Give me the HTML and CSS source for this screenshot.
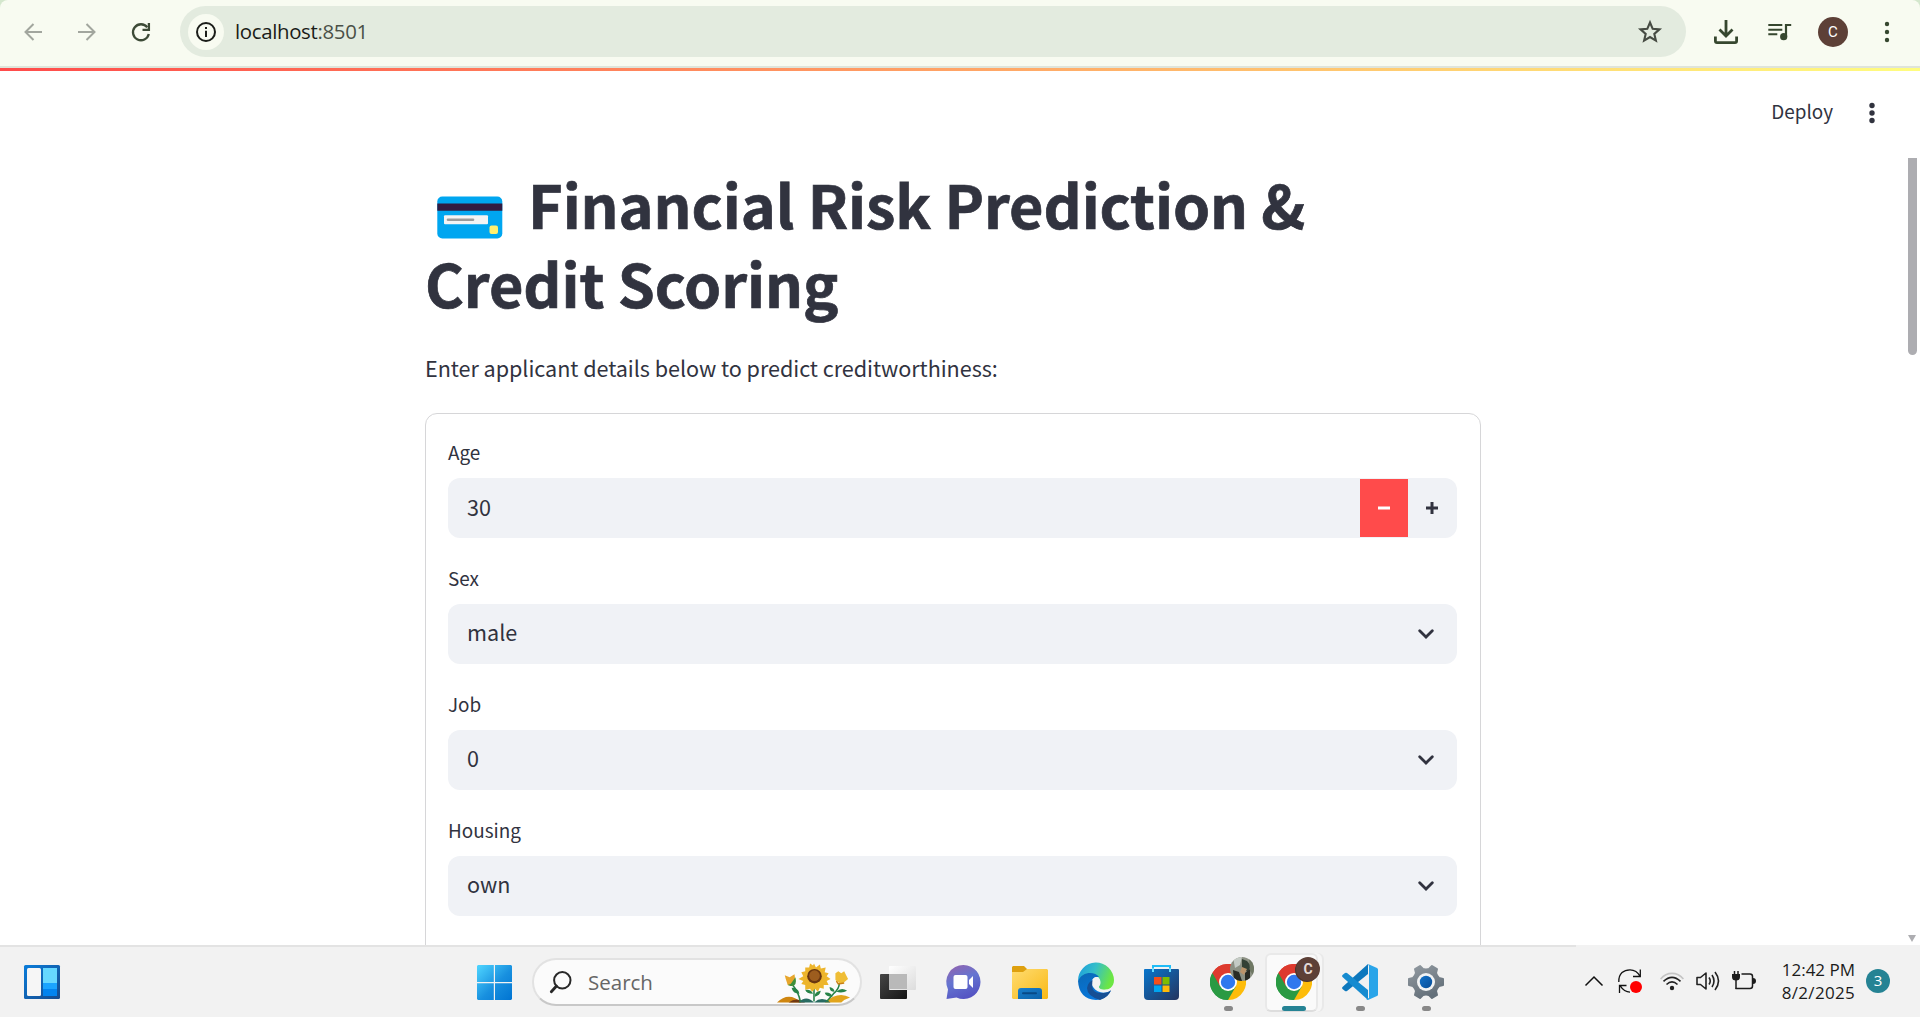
FILE: index.html
```html
<!DOCTYPE html>
<html lang="en">
<head>
<meta charset="utf-8">
<title>Financial Risk Prediction</title>
<link rel="stylesheet" href="styles.css">
</head>
<body>
<svg width="0" height="0" class="defs" aria-hidden="true">
  <defs>
    <symbol id="chrome" viewBox="0 0 36 36">
      <path d="M18 18 2.4 9A18 18 0 0 1 33.6 9Z" fill="#dd3a2e"/>
      <path d="M18 18 33.6 9A18 18 0 0 1 18 36Z" fill="#fdbc0a"/>
      <path d="M18 18 18 36A18 18 0 0 1 2.4 9Z" fill="#2a9a43"/>
      <path d="M18 9H33.6L26 18 18 36 25.8 22.5Z" fill="#fdbc0a"/>
      <path d="M2.4 9 10.2 22.5 18 27 25.8 22.5 18 36A18 18 0 0 1 2.4 9Z" fill="#2a9a43"/>
      <path d="M2.4 9A18 18 0 0 1 33.6 9H18L10.2 22.5Z" fill="#dd3a2e"/>
      <circle cx="18" cy="18" r="9" fill="#fff"/><circle cx="18" cy="18" r="7.2" fill="#2f78ee"/>
    </symbol>
    <symbol id="chevron" viewBox="0 0 16 10"><path d="M1.7 1.8 8 8 14.3 1.8" fill="none" stroke="#31333f" stroke-width="2.8" stroke-linecap="round" stroke-linejoin="miter"/></symbol>
  </defs>
</svg>

<header class="browser">
  <div class="nav">
    <svg width="18" height="18" viewBox="0 0 18 18" fill="none" stroke="#a2a69e" stroke-width="2"><path d="M18 9H1.5M9.5 1 1.5 9l8 8"/></svg>
    <svg width="18" height="18" viewBox="0 0 18 18" fill="none" stroke="#a2a69e" stroke-width="2"><path d="M0 9h16.5M8.500 1l8 8-8 8"/></svg>
    <svg width="18" height="18" viewBox="0 0 18 18" fill="none" stroke="#3d4b37" stroke-width="2.3"><path d="M15.300 4.300A8 8 0 1 0 16.800 11"/><path d="M16.900 0v6.800H10.500"/></svg>
  </div>
  <div class="omnibox">
    <span class="site-info"><svg width="20" height="20" viewBox="0 0 20 20"><circle cx="10" cy="10" r="9" fill="none" stroke="#1b1d19" stroke-width="2"/><path d="M10 8.700V15M10 5v2.100" stroke="#1b1d19" stroke-width="2"/></svg></span>
    <span class="url"><b>localhost</b>:8501</span>
    <svg class="star" width="24" height="24" viewBox="0 0 24 24" fill="none" stroke="#464b43" stroke-width="2.100"><path d="m12 2.500 2.700 6.300 6.800.6-5.200 4.500 1.600 6.700L12 17l-5.900 3.600 1.600-6.700L2.500 9.400l6.800-.6z"/></svg>
  </div>
  <div class="tools">
    <svg width="24" height="24" viewBox="0 0 24 24" fill="none" stroke="#36472f" stroke-width="2.800"><path d="M12 0v15M5.500 9.500 12 16l6.500-6.500"/><path d="M1.400 16.500V21q0 1.600 1.600 1.600h18q1.600 0 1.600-1.600v-4.500"/></svg>
    <svg width="24" height="20" viewBox="0 0 24 20" fill="none" stroke="#36472f" stroke-width="2"><path d="M.3 3h14M.3 7.700h14M.3 12.300h9"/><path d="M18 15V3h5.200" stroke-width="2.200"/><circle cx="15.700" cy="14.700" r="3.600" fill="#36472f" stroke="none"/></svg>
    <span class="avatar">C</span>
    <svg width="6" height="22" viewBox="0 0 6 22" fill="#36472f"><circle cx="3" cy="3" r="2.200"/><circle cx="3" cy="11" r="2.200"/><circle cx="3" cy="19" r="2.200"/></svg>
  </div>
</header>

<div class="page">
  <div class="decoration"></div>
  <div class="app-header">
    <span>Deploy</span>
    <svg width="6" height="22" viewBox="0 0 6 22" fill="#31333f"><circle cx="3" cy="3.500" r="2.700"/><circle cx="3" cy="11" r="2.700"/><circle cx="3" cy="18.500" r="2.700"/></svg>
  </div>
  <main>
    <h1><svg class="card" width="66" height="43" viewBox="0 0 66 43"><rect x=".3" y=".5" width="65" height="42" rx="5" fill="#00a6f0"/><path fill="#321b41" d="M.3 7.500h65v7.200H.3z"/><rect x="7" y="19.200" width="44" height="9" rx="1" fill="#f4f4f4"/><path d="M11 23.800h25" stroke="#9b9b9b" stroke-width="2.600" stroke-linecap="round"/><rect x="52.500" y="29.500" width="8.500" height="8.500" rx="2" fill="#fff06e"/></svg>Financial Risk Prediction &amp; <br>Credit Scoring</h1>
    <p class="intro">Enter applicant details below to predict creditworthiness:</p>
    <form class="form">
      <label>Age</label>
      <div class="field"><span>30</span><div class="steps"><i class="minus"><svg width="12" height="12"><path d="M0 6h12" stroke="#fff" stroke-width="3"/></svg></i><i><svg width="12" height="12"><path d="M0 6h12M6 0v12" stroke="#31333f" stroke-width="3"/></svg></i></div></div>
      <label>Sex</label>
      <div class="field select"><span>male</span><svg class="chev" width="16" height="10"><use href="#chevron"/></svg></div>
      <label>Job</label>
      <div class="field select"><span>0</span><svg class="chev" width="16" height="10"><use href="#chevron"/></svg></div>
      <label>Housing</label>
      <div class="field select"><span>own</span><svg class="chev" width="16" height="10"><use href="#chevron"/></svg></div>
    </form>
  </main>
  <div class="scroll-thumb"></div>
  <div class="scroll-arrow"></div>
</div>

<footer class="taskbar">
  <div class="widgets">
    <svg width="36" height="34" viewBox="0 0 36 34"><defs><linearGradient id="wg" x2="1" y2="1"><stop stop-color="#0a7ddb"/><stop offset="1" stop-color="#174a8c"/></linearGradient></defs><rect width="36" height="34" rx="1.500" fill="url(#wg)"/><rect x="3" y="3" width="14" height="28" rx="1.500" fill="#f6f6f6"/><path fill="#66d8ff" d="M19 3h14v15H19z"/><path fill="#1ba4ff" d="M19 18h14v6H19z"/><path fill="#0384ef" d="M19 24h14v7H19z"/></svg>
  </div>
  <div class="center">
    <svg class="start" width="35" height="35" viewBox="0 0 35 35"><defs><linearGradient id="win" x1="0" y1="0" x2="35" y2="35" gradientUnits="userSpaceOnUse"><stop stop-color="#50d6ff"/><stop offset=".55" stop-color="#1890df"/><stop offset="1" stop-color="#0074d2"/></linearGradient></defs><path fill="url(#win)" d="M1 0h15.800v17H0V1zM18 0h16l1 1v16H18zM0 18.200h16.800V35H1l-1-1zM18 18.200h17V34l-1 1H18z"/></svg>
    <div class="search">
      <svg width="22" height="22" viewBox="0 0 22 22" fill="none" stroke="#282828" stroke-width="2"><circle cx="12.300" cy="9.300" r="8.200"/><path d="M6.500 15 1.300 20.700" stroke-width="2.800" stroke-linecap="round"/></svg>
      <span>Search</span>
      <svg class="flowers" width="74" height="40" viewBox="0 0 76 40">
        <path d="M0 40q12-12 25 0z" fill="#cf8610"/><path d="M12 40q8-6 17 0z" fill="#713812"/><path d="M49 40q14-12 26-5-6 2-9 5z" fill="#e2a51c"/>
        <path d="M22 40q8-8 16 0 8-7 17 0z" fill="#286b61"/>
        <path d="M16 22q6 7 8 17M38 21v18M64 20q0 6-6 11l-7 8" stroke="#278348" stroke-width="1.600" fill="none"/>
        <path d="M23 31q-7 0-8-6 7 0 8 6zM37 31q-7 0-8-4 6-1 8 4zM39 34q-1-5 6-6-1 5-6 6zM59 29q-5 0-5-5 5 1 5 5zM61 29q5-5 11-1-5 3-11 1zM57 34q-7 0-8-4 6-1 8 4z" fill="#278348"/>
        <path d="M9 16 8 12l5 2 5-3 1 8-3 4-5-1z" fill="#e7a62c"/><path d="m11 22 3-1 5-7q2 10-5 9z" fill="#3d8f3b"/>
        <path fill="#edb52c" d="m38 0 2 4 4-3 1 4 5-1-1 5 4 1-2 3 4 3-4 2 2 4-5 0 0 4-4-1-2 4-3-3-3 3-2-3-5 1 0-5-4-1 2-3-5-2 5-3-2-4 4-1 0-4 4 0 1-4 3 2z"/><circle cx="38.500" cy="13" r="7.500" fill="#693510"/><circle cx="38.500" cy="12.500" r="5.500" fill="#9d5d1e"/>
        <path d="m60 17 0-7 3-2 3 2 3-2 2 4 2 4-5 4-4 0z" fill="#efbd35"/><path d="m61 18 2 3 6-1" stroke="#c98015" stroke-width="1.500" fill="none"/>
      </svg>
    </div>
    <div class="apps">
      <div class="app"><svg width="36" height="36" viewBox="0 0 36 36"><defs><linearGradient id="dk" x2="1" y2="1"><stop stop-color="#464646"/><stop offset="1" stop-color="#151515"/></linearGradient><linearGradient id="lt" x2="1" y2="1"><stop stop-color="#fff"/><stop offset="1" stop-color="#dcdcdc"/></linearGradient></defs><rect y="10" width="27" height="25" rx="1" fill="url(#dk)"/><rect x="9" y="2" width="27" height="24" rx="1" fill="url(#lt)"/><path fill="#b9b9b9" d="M9 10h18v15H9z"/></svg></div>
      <div class="app"><svg width="36" height="36" viewBox="0 0 36 36"><defs><linearGradient id="ch" x1=".2" x2=".6" y2="1"><stop stop-color="#9064b0"/><stop offset=".45" stop-color="#6575d1"/><stop offset="1" stop-color="#5452c2"/></linearGradient></defs><path fill="url(#ch)" d="M17.500 1a17 17 0 1 1-7 32.500L.5 35 2 25.500A17 17 0 0 1 17.500 1z"/><rect x="7.500" y="11" width="14" height="14" rx="2" fill="#fff"/><path fill="#fff" d="m23 16 4-4v12l-4-4z"/></svg></div>
      <div class="app"><svg width="36" height="36" viewBox="0 0 36 36"><defs><linearGradient id="fo" x2="1" y2="1"><stop stop-color="#ffdc72"/><stop offset="1" stop-color="#f9b915"/></linearGradient><linearGradient id="fb" x2="1" y2="1"><stop stop-color="#197fcb"/><stop offset="1" stop-color="#0c62aa"/></linearGradient></defs><path fill="#dea00f" d="M1 2h11l3 3v6H0V3z"/><path fill="url(#fo)" d="M0 8h11l4-3h20l1 1v28l-1 1H1l-1-1z"/><path fill="url(#fb)" d="M6 35V27q0-3 3-3h18q3 0 3 3v8z"/><path d="M11 29.300h13" stroke="#074a87" stroke-width="2" stroke-linecap="round"/></svg></div>
      <div class="app"><svg width="36" height="36" viewBox="0 0 36 36"><defs><linearGradient id="eg" x2="1" y2=".3"><stop stop-color="#1a9be0"/><stop offset=".5" stop-color="#35bfc8"/><stop offset="1" stop-color="#6ce644"/></linearGradient><linearGradient id="ed" x2=".5" y2="1"><stop stop-color="#0b68b5"/><stop offset="1" stop-color="#0878dd"/></linearGradient></defs><path fill="url(#eg)" d="M0 17A18 18 0 0 1 36 16c0 7-5 10-11 10-5 0-5-3-3-5 1-2 1-6-3-9Q10 7 0 17z"/><path fill="url(#ed)" d="M0 17C4 7 17 7 21 13c-7-1-9 5-6 10 4 6 11 7 18 4Q27 36 18 36 1 35 0 17z"/><path fill="#164f94" d="M15 16q-4 14 10 13 5 0 8-3-2 7-11 10-13-4-13-12 1-6 6-8z"/><path fill="#f3f3f3" d="M18.500 13c-5 0-5 7-1 11q6 4 15 1Q23 27 21 23.500c-.5-1.500 1-2 1-5q0-5-3.500-5.500z"/></svg></div>
      <div class="app"><svg width="36" height="36" viewBox="0 0 36 36"><defs><linearGradient id="st" x2="1" y2="1"><stop stop-color="#0876cd"/><stop offset="1" stop-color="#25345e"/></linearGradient></defs><path d="M9 8V2h17v6" fill="none" stroke="#20bcf7" stroke-width="2"/><path fill="url(#st)" d="M0 6q0-1 1-1h33q1 0 1 1v26q0 4-4 4H4q-4 0-4-4z"/><path d="M9 4v4M26 4v4" stroke="#65dcff" stroke-width="2"/><path fill="#f34f1c" d="M10 13h7.500v7.500H10z"/><path fill="#7fbc00" d="M18.500 13H25.500v7.500h-7z"/><path fill="#00a5f0" d="M10 21.500h7.500V28H10z"/><path fill="#ffba08" d="M18.500 21.500H25.500V28h-7z"/></svg></div>
      <div class="app"><svg width="36" height="36"><use href="#chrome"/></svg><svg class="profile" width="24" height="24" viewBox="0 0 24 24"><defs><clipPath id="pc"><circle cx="12" cy="12" r="12"/></clipPath></defs><g clip-path="url(#pc)"><path fill="#8c9184" d="M0 0h24v24H0z"/><path fill="#c4cbc5" d="M3 0h9l-2 8-5 3z"/><path fill="#334035" d="m12 2 5 2 4 5-3 6-6-3z"/><path fill="#bb946b" d="m12 10 5 2-3 6-4-3z"/><path fill="#292b24" d="m3 13 6 2 3 9H4zM15 16l5-4v10l-5 2z"/><path fill="#6f7864" d="M19 2h5v17l-4-5z"/></g></svg><span class="dot"></span></div>
      <div class="app"><div class="tile"></div><svg width="36" height="36"><use href="#chrome"/></svg><span class="profile initial">C</span><span class="dot active"></span></div>
      <div class="app"><svg width="36" height="36" viewBox="0 0 36 36"><path fill="#0d78bd" d="M26 0v10L5 27q-1 .7-2 0l-2.500-2q-1-1 0-2z"/><path fill="#168bd0" d="M26 36V26L5 9q-1-.7-2 0L.5 11q-1 1 0 2z"/><path fill="#2aa5e9" d="m26 0 9 4q1 .5 1 1.500v25q0 1-1 1.500l-9 4-2-1 3-1V2z"/></svg><span class="dot"></span></div>
      <div class="app"><svg width="36" height="36" viewBox="0 0 36 36"><defs><linearGradient id="ge" x2=".5" y2="1"><stop stop-color="#929aa1"/><stop offset="1" stop-color="#64707a"/></linearGradient><linearGradient id="gb" x2="1" y2="1"><stop stop-color="#1273ca"/><stop offset="1" stop-color="#074c96"/></linearGradient></defs><path fill="url(#ge)" stroke="url(#ge)" stroke-width="2" stroke-linejoin="round" d="m12 2 3 3q3 1 6 0l3-3 5 3-1 4q1 3 3 5l4 1v6l-4 1q-2 2-3 5l1 4-5 3-3-3q-3-1-6 0l-3 3-5-3 1-4q-1-3-3-5l-4-1v-6l4-1q2-2 3-5L7 5z"/><circle cx="18" cy="18" r="9" fill="#f1f3f4"/><circle cx="18" cy="18" r="6.200" fill="url(#gb)"/></svg><span class="dot"></span></div>
    </div>
  </div>
  <div class="tray">
    <svg width="18" height="10" viewBox="0 0 18 10" fill="none" stroke="#111" stroke-width="1.500"><path d="m.5 9.500 8.500-8.500 8.500 8.500"/></svg>
    <svg width="24" height="24" viewBox="0 0 24 24" fill="none" stroke="#111" stroke-width="1.300"><path d="M.8 13C.5 4 6 .8 12 .8c5 0 8 2.500 10 6.500M22.300.5v7H15M12 23.200c-4 0-7-2-10-6.500M1.500 24v-7.500H8.500"/><circle cx="18" cy="18" r="6" fill="#f00" stroke="none"/></svg>
    <svg width="24" height="19" viewBox="0 0 24 19" fill="none" stroke="#222" stroke-width="1.600"><path d="M.6 7C7-.5 17-.5 23.400 7" stroke="#c5c5c5"/><path d="M3.500 9.300q8.500-8 17 0M6.500 12.500q5.500-5.300 11 0"/><circle cx="12" cy="16" r="2.200" fill="#222" stroke="none"/></svg>
    <svg width="24" height="20" viewBox="0 0 24 20" fill="none" stroke="#222" stroke-width="1.600"><path d="M1 6.500h3.500L10 2v16L4.500 13.500H1z" stroke-linejoin="round"/><path d="M13 6.500q2.500 3.500 0 7M16 4q4 6 0 12M19 1q7 9 0 18"/></svg>
    <svg class="battery" width="24" height="19" viewBox="0 0 24 19" fill="none" stroke="#1c1c1c" stroke-width="1.500"><path d="M2.500 0v4M6 0v4M4 8v10"/><path fill="#1c1c1c" stroke="none" d="M0 3h8v3q0 3.500-4 3.500T0 6zM21 7q3 0 3 3t-3 3z"/><path d="M9.500 3H18q2.500 0 2.500 2.500v9.500q0 2.500-2.500 2.500H3.500"/></svg>
    <div class="clock"><span class="time">12:42 PM</span><span class="date">8/2/2025</span></div>
    <span class="badge">3</span>
  </div>
</footer>
</body>
</html>
```

FILE: styles.css
```css
* { box-sizing: border-box; }
body {
  margin: 0;
  width: 1920px;
  height: 1017px;
  display: flex;
  flex-direction: column;
  overflow: hidden;
  background: #fff;
  color: #31333f;
  font-family: "Noto Sans CJK SC", "Noto Sans", sans-serif;
}
svg { display: block; flex: none; overflow: visible; }
.defs { position: absolute; }

/* Browser toolbar */
.browser {
  flex: none;
  height: 68px;
  display: flex;
  align-items: center;
  padding: 0 30px 3px 24px;
  border-bottom: 2px solid #dfe4da;
  border-radius: 8px 8px 0 0;
  background: #f8fbf1;
  box-shadow: 0 -8px 0 8px #d4e7cd;
  font-family: "Open Sans", sans-serif;
  clip-path: inset(0);
}
.nav { display: flex; gap: 36px; width: 156px; }
.omnibox {
  width: 1506px;
  height: 51px;
  display: flex;
  align-items: center;
  padding: 0 24px 0 9px;
  border-radius: 26px;
  background: #e3ebdf;
}
.site-info {
  width: 36px;
  height: 36px;
  margin-left: -1px;
  display: grid;
  place-items: center;
  border-radius: 50%;
  background: #f8fbf1;
}
.url { margin: 0 auto 1px 11px; font-size: 20.4px; letter-spacing: -.33px; color: #4a5047; }
.url b { font-weight: 400; color: #1a1c18; }
.tools { flex: 1; display: flex; align-items: center; padding-left: 28px; }
.tools svg:nth-child(2) { margin-left: 30px; }
.avatar {
  width: 30px;
  height: 30px;
  margin: 0 36px 0 26px;
  border-radius: 50%;
  background: #5d4037;
  color: #fff;
  font: 15px/30px Roboto, sans-serif;
  text-align: center;
}

/* Application */
.page { position: relative; flex: none; height: 877px; overflow: hidden; }
.decoration { height: 3px; background: linear-gradient(90deg, #ff4b4b, #fffd80); }
.app-header {
  height: 84px;
  display: flex;
  align-items: center;
  justify-content: flex-end;
  gap: 36px;
  padding-right: 45px;
  font-size: 18.9px;
}
.app-header span { margin-bottom: 5px; }
main { width: 1056px; margin: 9px 0 0 425px; }
h1 {
  margin: 0;
  font-size: 59.4px;
  line-height: 79px;
  font-weight: 700;
  letter-spacing: -.1px;
  -webkit-text-stroke: .7px #31333f;
  white-space: nowrap;
}
.card { display: inline-block; margin: 0 25px 0 12px; vertical-align: -10px; }
.intro { margin: 27px 0 26px; font-size: 21.6px; line-height: 38px; letter-spacing: -.05px; }
.form { height: 620px; padding: 22px 23px 22px 22px; border: 1px solid #d6d6d8; border-radius: 12px; }
label { display: block; height: 31px; margin-bottom: 11px; font-size: 18.9px; line-height: 31px; }
.field {
  height: 60px;
  margin-bottom: 24px;
  padding-left: 19px;
  display: flex;
  align-items: center;
  justify-content: space-between;
  border-radius: 12px;
  background: #f0f2f6;
  overflow: hidden;
  font-size: 21.6px;
}
.field span { padding-bottom: 4px; }
.select span { padding-bottom: 5px; }
.chev { margin-right: 23px; }
.steps { display: flex; padding-right: 1px; }
.steps i { width: 48px; height: 58px; display: grid; place-items: center; }
.steps .minus { background: #ff4b4b; }
.scroll-thumb { position: absolute; left: 1908px; top: 90px; width: 9px; height: 197px; border-radius: 0 0 5px 5px; background: #adadb1; }
.scroll-arrow { position: absolute; left: 1908px; top: 867px; border: 4.5px solid transparent; border-top: 7px solid #adadb1; border-bottom: 0; }

/* Taskbar */
.taskbar {
  flex: none;
  height: 72px;
  display: flex;
  background: linear-gradient(#e3e3e3, #e3e3e3) 0 0 / 1576px 2px no-repeat #f2f2f2;
  font-family: "Open Sans", sans-serif;
}
.widgets { width: 477px; padding: 20px 24px; }
.center { display: flex; }
.start { margin: 20px 20px 0 0; }
.search {
  width: 330px;
  height: 48px;
  margin-top: 13px;
  padding-left: 16px;
  display: flex;
  align-items: center;
  border: 2px solid #e2e2e2;
  border-bottom-color: #c8c8c8;
  border-radius: 24px;
  background: #fbfbfb;
}
.search span { margin-left: 16px; font-size: 20.5px; color: #666; }
.flowers { margin: 2px 9px 0 auto; }
.apps { display: flex; margin-left: 3px; }
.app { position: relative; width: 66px; padding: 19px 15px; }
.app > svg { position: relative; }
.app > .profile { position: absolute; left: 35px; top: 12px; }
.initial {
  width: 24px;
  height: 24px;
  border-radius: 50%;
  background: #5d4037;
  box-shadow: -1px 1px 0 #4b342d;
  color: #e4dad6;
  font: 700 14px/24px Roboto, sans-serif;
  text-align: center;
}
.tile { position: absolute; left: 4px; top: 8px; width: 53px; height: 59px; border: 2px solid #e9e9e9; border-bottom-color: #ddd; border-radius: 6px; background: #fafafa; box-shadow: 4px 0 0 #f6f6f6, 6px 0 0 #e9e9e9; }
.dot { position: absolute; left: 29px; top: 61px; width: 9px; height: 5px; border-radius: 3px; background: #888; }
.dot.active { left: 21px; width: 24px; background: #258394; }
.tray { display: flex; align-items: center; margin-left: 126px; height: 72px; gap: 12px; }
.tray > svg:nth-child(2) { margin-left: 3px; }
.tray > svg:nth-child(3) { margin-left: 6px; }
.tray > .battery { margin-bottom: 2px; }
.clock { width: 87px; display: flex; flex-direction: column; align-items: flex-end; font-size: 17px; line-height: 23px; color: #1b1b1b; white-space: nowrap; }
.date { letter-spacing: .3px; }
.badge { width: 24px; height: 24px; margin-left: -1px; border-radius: 50%; background: #258394; color: #fff; font-size: 15px; line-height: 23px; text-align: center; }
```
